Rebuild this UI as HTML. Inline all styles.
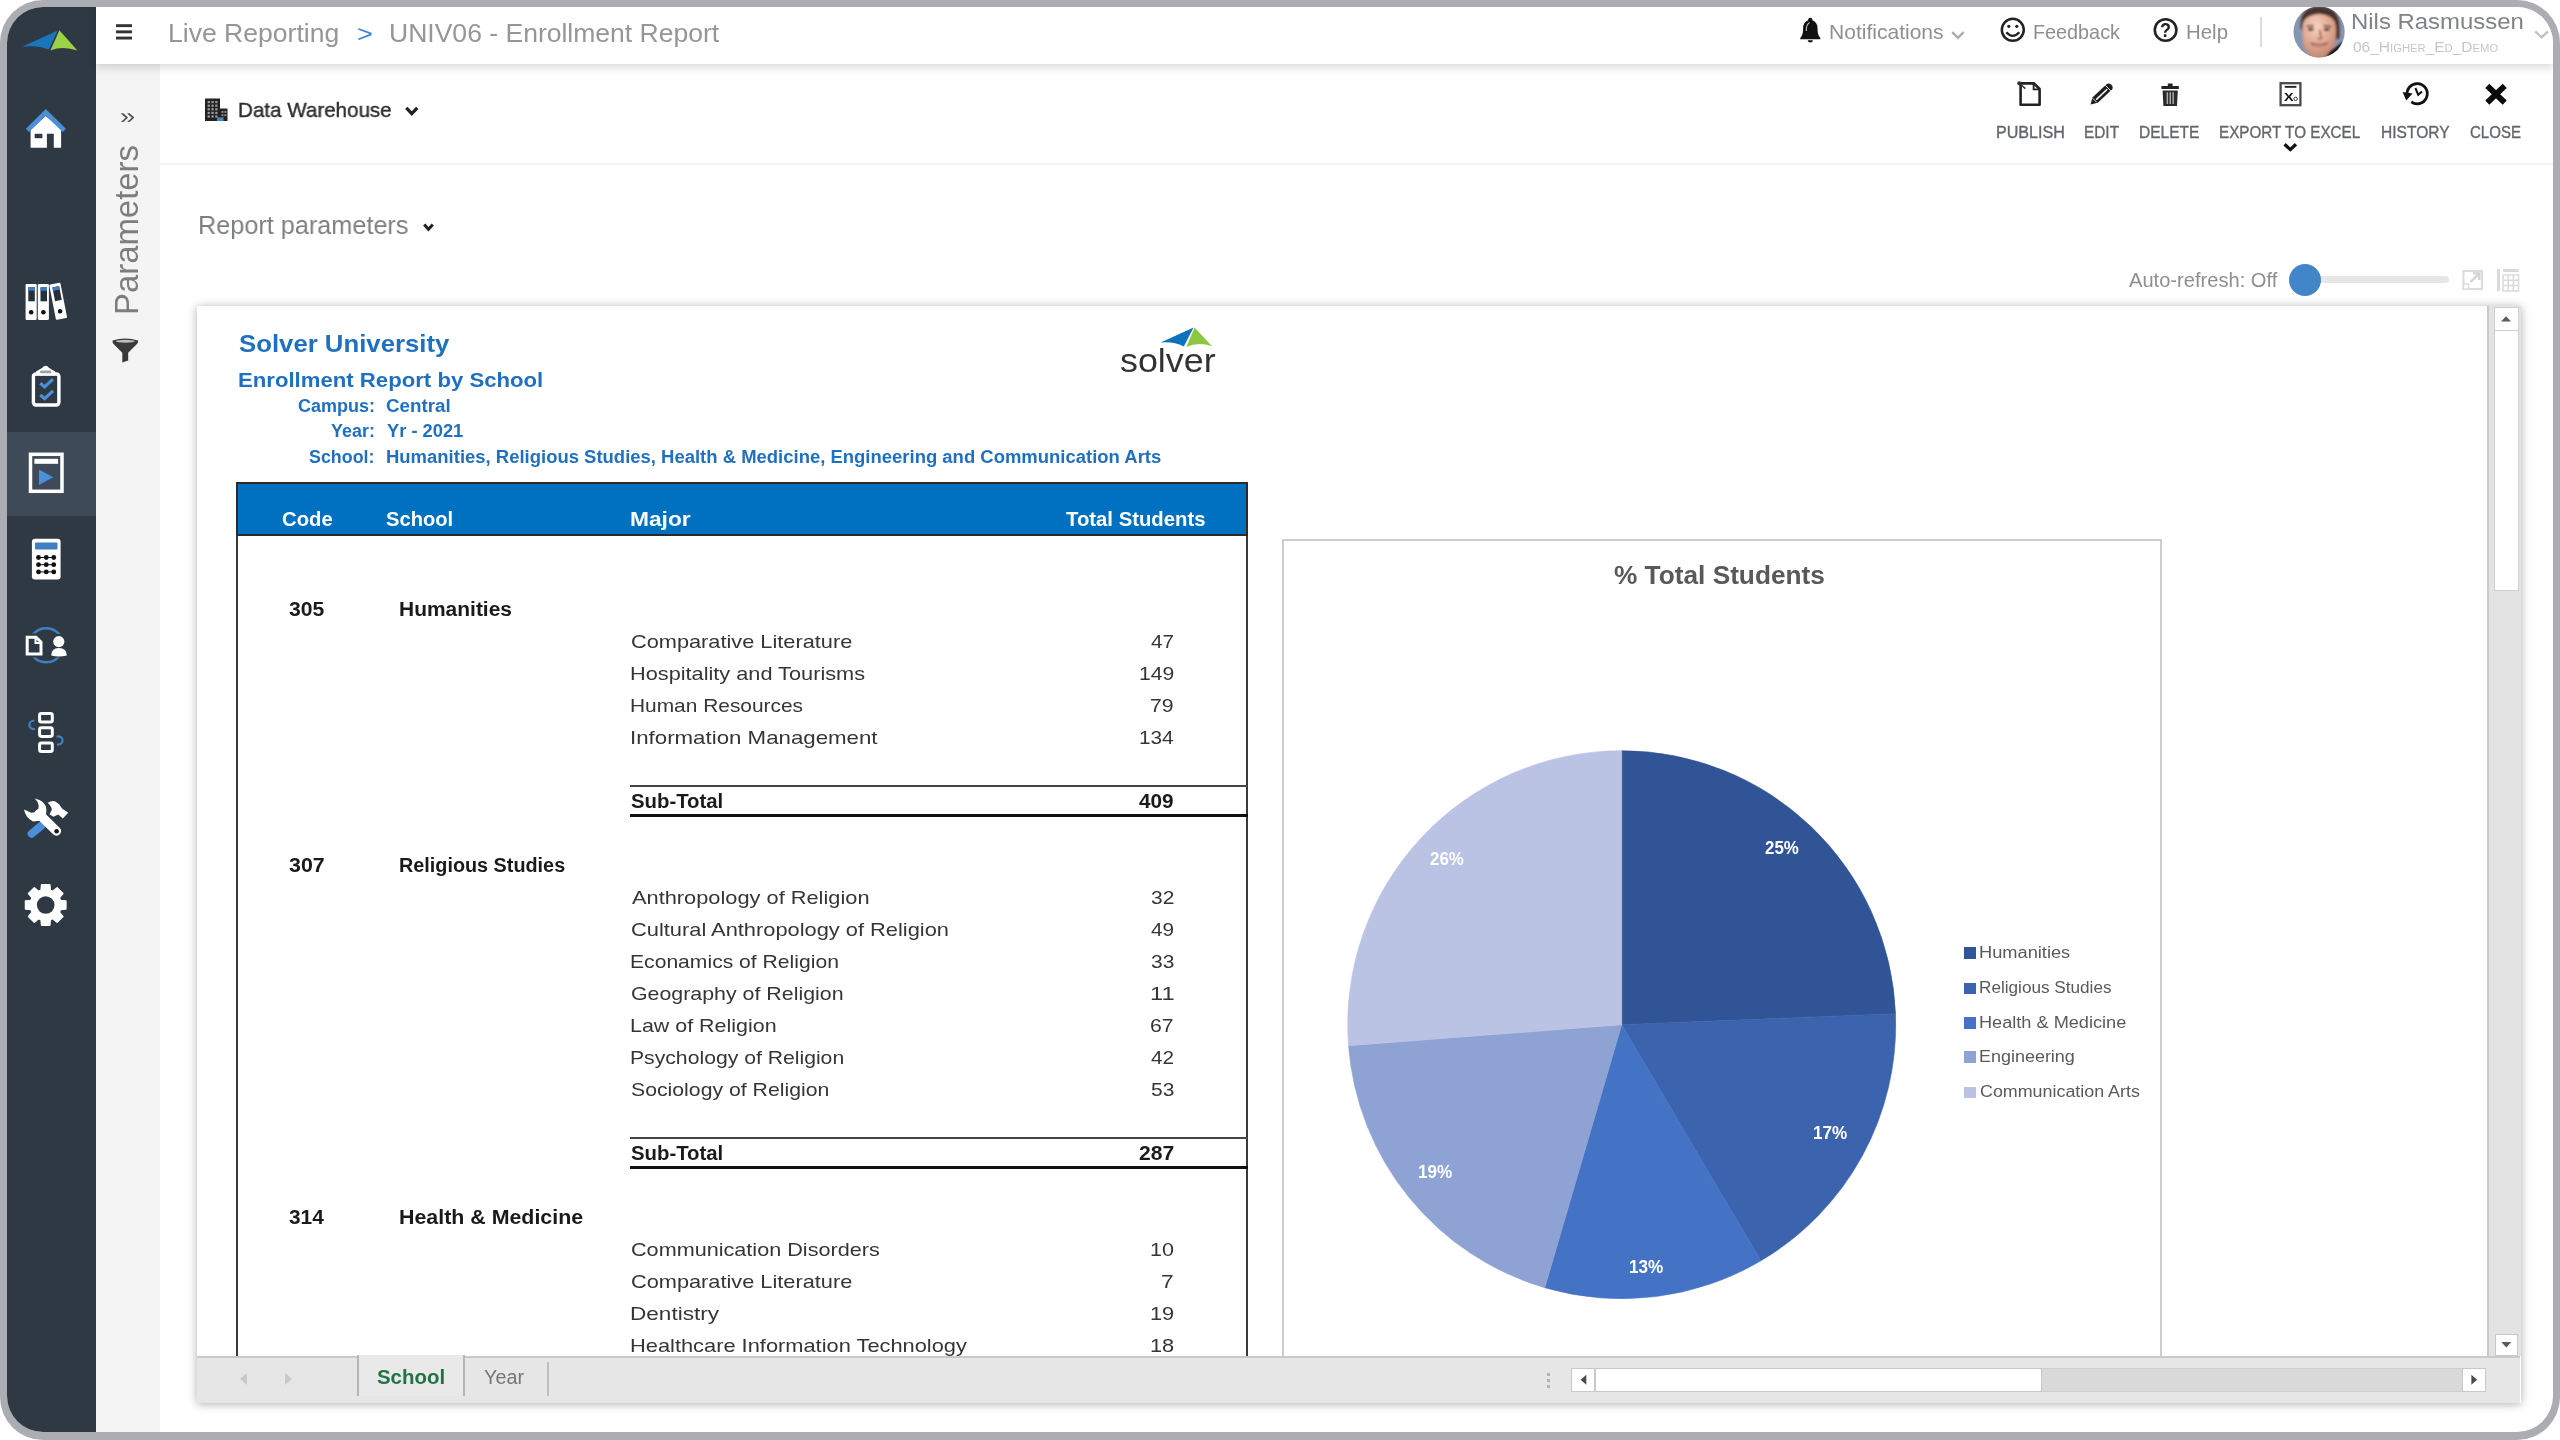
<!DOCTYPE html>
<html lang="en"><head><meta charset="utf-8"><title>UNIV06 - Enrollment Report</title>
<style>
html,body{margin:0;padding:0;background:#fff;}
body{width:2560px;height:1440px;overflow:hidden;position:relative;font-family:"Liberation Sans", sans-serif;}
#frame{position:absolute;left:0;top:0;width:2560px;height:1440px;background:#abadb2;border-radius:43px;}
#app{position:absolute;left:7px;top:7px;width:2546px;height:1425px;background:#fff;border-radius:36px;overflow:hidden;}
#abs{position:absolute;left:-7px;top:-7px;width:2560px;height:1440px;will-change:transform;}
.b{position:absolute;}
.ic{left:0;top:0;pointer-events:none;}
.t{position:absolute;margin:0;white-space:pre;line-height:1;font-weight:normal;transform-origin:0 50%;}
</style></head>
<body>
<div id="frame"><div id="app"><div id="abs">
<nav id="sidebar" aria-label="Main navigation">
<div class="b" style="left:7px;top:7px;width:89px;height:1426px;background:#2f3943;"></div>
<div class="b" style="left:7px;top:432px;width:89px;height:84px;background:#3e4a57;"></div>
<svg class="b ic" role="img" aria-label="Navigation icons" width="2560" height="1440" viewBox="0 0 2560 1440"><path d="M22.2,46.8 L57.6,30.6 L49,49.6 Q37,44.6 22.2,46.8Z" fill="#1b75bc"/>
<path d="M59.4,30.2 L77.4,50.6 Q63,45.6 50.4,50.4Z" fill="#9bd047"/>
<path d="M30.6,147.7V129.5L45.8,116L61.1,129.5V147.7H53.8V133.8H46.9V147.7Z" fill="#ffffff"/>
<rect x="34.7" y="133.8" width="7.7" height="4.4" fill="#2f3943"/>
<path d="M27.5,130.3L45.8,112.3L64.3,130.3" fill="none" stroke="#4a90d9" stroke-width="4.6" stroke-linejoin="miter"/>
<g><rect x="25.6" y="284" width="11.1" height="36" rx="1.2" fill="#ffffff"/><rect x="28.3" y="287.3" width="6.5" height="14" fill="#26303a"/><rect x="28.3" y="287.3" width="6.5" height="3.4" fill="#3f7fc6"/><circle cx="31.150000000000002" cy="312.2" r="2.3" fill="#111"/></g>
<g><rect x="37.8" y="284" width="11.1" height="36" rx="1.2" fill="#ffffff"/><rect x="40.5" y="287.3" width="6.5" height="14" fill="#26303a"/><rect x="40.5" y="287.3" width="6.5" height="3.4" fill="#3f7fc6"/><circle cx="43.349999999999994" cy="312.2" r="2.3" fill="#111"/></g>
<g transform="rotate(-11 56 320)"><rect x="56" y="284" width="11.4" height="36" rx="1.2" fill="#ffffff"/><rect x="58.7" y="287.3" width="6.800000000000001" height="14" fill="#26303a"/><rect x="58.7" y="287.3" width="6.800000000000001" height="3.4" fill="#3f7fc6"/><circle cx="61.7" cy="312.2" r="2.3" fill="#111"/></g>
<rect x="33.4" y="374" width="25.5" height="31" rx="2.5" fill="none" stroke="#ffffff" stroke-width="3.4"/>
<path d="M36,375.5 V371.5 L42,368 Q45.6,363.5 49.2,368 L55.2,371.5 V375.5Z" fill="#ffffff"/>
<rect x="40" y="370.6" width="11.4" height="2.6" rx="1.3" fill="#9aa3ad"/>
<path d="M40.3,383.3 L44.6,386.90000000000003 L53,379.1" fill="none" stroke="#4a90d9" stroke-width="3.2"/>
<path d="M40.3,395.0 L44.6,398.6 L53,390.8" fill="none" stroke="#4a90d9" stroke-width="3.2"/>
<rect x="30.5" y="454.3" width="31.5" height="37" fill="none" stroke="#ffffff" stroke-width="3.5"/>
<rect x="34.4" y="458.8" width="23.7" height="5" fill="#ffffff"/>
<path d="M39,469.4 L53.2,477.2 L39,485Z" fill="#4a90d9"/>
<rect x="31.9" y="538.8" width="28.7" height="40.6" rx="3.2" fill="#ffffff"/>
<rect x="35" y="542.5" width="22.5" height="6.9" rx="1" fill="#3f7fc6"/>
<circle cx="38.5" cy="557.5" r="2.4" fill="#111"/>
<circle cx="38.5" cy="564.7" r="2.4" fill="#111"/>
<circle cx="38.5" cy="571.9" r="2.4" fill="#111"/>
<circle cx="46.25" cy="557.5" r="2.4" fill="#111"/>
<circle cx="46.25" cy="564.7" r="2.4" fill="#111"/>
<circle cx="46.25" cy="571.9" r="2.4" fill="#111"/>
<circle cx="53.75" cy="557.5" r="2.4" fill="#111"/>
<circle cx="53.75" cy="564.7" r="2.4" fill="#111"/>
<circle cx="53.75" cy="571.9" r="2.4" fill="#111"/>
<path d="M38.5,557.5H53.75" stroke="#111" stroke-width="1"/>
<path d="M38.5,564.7H53.75" stroke="#111" stroke-width="1"/>
<path d="M38.5,571.9H53.75" stroke="#111" stroke-width="1"/>
<circle cx="46.2" cy="645.3" r="17" fill="none" stroke="#3f7fc0" stroke-width="2.6"/>
<rect x="24" y="633.5" width="20.5" height="24" fill="#2f3943"/>
<rect x="49.5" y="634" width="19" height="23.5" fill="#2f3943"/>
<path d="M27.2,637.2 H36 L41,642.2 V654 H27.2Z" fill="none" stroke="#ffffff" stroke-width="3"/>
<path d="M35.5,637.5 V643 H41" fill="none" stroke="#ffffff" stroke-width="2"/>
<circle cx="58.8" cy="641.6" r="5.6" fill="#ffffff"/>
<path d="M51.2,655.6 Q51.2,648 58.8,648 Q66.8,648 66.8,655.6 Q59,657.5 51.2,655.6Z" fill="#ffffff"/>
<rect x="39.6" y="713.4" width="12.7" height="8.6" rx="1.8" fill="none" stroke="#ffffff" stroke-width="3"/>
<rect x="39.6" y="727.8" width="12.7" height="8.6" rx="1.8" fill="none" stroke="#ffffff" stroke-width="3"/>
<rect x="39.6" y="742.9" width="12.7" height="8.6" rx="1.8" fill="none" stroke="#ffffff" stroke-width="3"/>
<path d="M34.5,720.5 Q28.5,721 29.5,726 Q30.5,729.5 35,729" fill="none" stroke="#3f7fc0" stroke-width="2.2"/>
<path d="M56.5,736.5 Q63,736 62.5,741 Q61.5,745 57,744.5" fill="none" stroke="#3f7fc0" stroke-width="2.2"/>
<path d="M41.4,825.6 L31.6,833.8" stroke="#4a90d9" stroke-width="8" stroke-linecap="round"/>
<path d="M39,814 L56.4,831" stroke="#ffffff" stroke-width="9.4" stroke-linecap="round"/>
<path d="M34.6,798.6 Q45.8,800.4 46.4,810 Q46.6,817 42,820.6 L33,821.6 Q25.4,817.6 24,809.6 L30.6,812.6 Q36,813 38.4,808.4 Q39.6,803 34.6,798.6Z" fill="#ffffff"/>
<circle cx="56.6" cy="831.3" r="2.3" fill="#15191e"/>
<path d="M47.6,802.8 Q52,800.2 55.4,801.4 L59.4,804.4 L62,808.6 L68.2,812.8 L62.8,818.4 L58.2,814.4 L53.4,816.8 L49.4,814.2 L51.8,810 Q51.6,806 47.6,802.8Z" fill="#ffffff"/>
<path d="M41.1,890.3L41.6,884.8L49.8,884.8L50.3,890.3L52.9,891.4L57.1,887.8L62.9,893.6L59.3,897.8L60.4,900.4L65.9,900.9L65.9,909.1L60.4,909.6L59.3,912.2L62.9,916.4L57.1,922.2L52.9,918.6L50.3,919.7L49.8,925.2L41.6,925.2L41.1,919.7L38.5,918.6L34.3,922.2L28.5,916.4L32.1,912.2L31.0,909.6L25.5,909.1L25.5,900.9L31.0,900.4L32.1,897.8L28.5,893.6L34.3,887.8L38.5,891.4Z" fill="#ffffff" stroke="#ffffff" stroke-width="1.5" stroke-linejoin="round"/>
<circle cx="45.7" cy="905" r="8.8" fill="#2f3943"/></svg>
</nav>
<aside id="params" aria-label="Parameters panel">
<div class="b" style="left:96px;top:64px;width:64px;height:1369px;background:#f4f4f4;"></div>
<span class="t" style="font-size:22px;color:#555;left:120.07px;top:105.88px;transform:scaleX(1.2381);">»</span>
<span class="t" style="font-size:33px;color:#7b7e81;left:138.00px;top:315.34px;transform-origin:0 0;transform:rotate(-90deg) translateY(-27.93px) scaleX(0.9967);">Parameters</span>
<svg class="b ic" role="img" aria-label="Filter icon" width="2560" height="1440" viewBox="0 0 2560 1440"><path d="M112.5,340.5 Q125.3,336.5 138,340.5 Q138.6,343 136,345 L128.2,352.8 V360.5 L122.3,362.5 V352.8 L114.5,345 Q112,343 112.5,340.5Z" fill="#3a3a3a"/>
<ellipse cx="125.3" cy="341.2" rx="9.5" ry="1.5" fill="#bdbdbd"/></svg>
</aside>
<main id="main">
<section id="toolbar" aria-label="Report toolbar">
<div class="b" style="left:160px;top:163px;width:2393px;height:1.5px;background:#f4f4f4;"></div>
<span class="t" style="font-size:21px;color:#2e2e2e;-webkit-text-stroke:0.4px #2e2e2e;left:237.78px;top:99.22px;transform:scaleX(0.9802);">Data Warehouse</span>
<span class="t" style="font-size:16.2px;color:#62676c;-webkit-text-stroke:0.35px #62676c;left:1995.71px;top:124.29px;transform:scaleX(0.9948);">PUBLISH</span>
<span class="t" style="font-size:16.2px;color:#62676c;-webkit-text-stroke:0.35px #62676c;left:2084.06px;top:124.29px;transform:scaleX(0.9504);">EDIT</span>
<span class="t" style="font-size:16.2px;color:#62676c;-webkit-text-stroke:0.35px #62676c;left:2139.15px;top:124.29px;transform:scaleX(0.9607);">DELETE</span>
<span class="t" style="font-size:16.2px;color:#62676c;-webkit-text-stroke:0.35px #62676c;left:2219.08px;top:124.29px;transform:scaleX(0.9418);">EXPORT TO EXCEL</span>
<span class="t" style="font-size:16.2px;color:#62676c;-webkit-text-stroke:0.35px #62676c;left:2380.55px;top:124.29px;transform:scaleX(0.9606);">HISTORY</span>
<span class="t" style="font-size:16.2px;color:#62676c;-webkit-text-stroke:0.35px #62676c;left:2469.96px;top:124.29px;transform:scaleX(0.9290);">CLOSE</span>
<span class="t" style="font-size:10.8px;color:#111;font-weight:bold;left:2284.33px;top:91.56px;transform:scaleX(1.3333);">X</span>
<span class="t" style="font-size:26px;color:#7d8083;left:198.06px;top:212.39px;transform:scaleX(0.9708);">Report parameters</span>
<span class="t" style="font-size:20px;color:#8d8f92;left:2129.00px;top:269.57px;transform:scaleX(1.0054);">Auto-refresh: Off</span>
<div class="b" style="left:2310px;top:276px;width:139px;height:7px;background:#e6e6e6;border-radius:4px;"></div>
<div class="b" style="left:2289px;top:263.5px;width:32px;height:32px;background:#4285c9;border-radius:50%;"></div>
<svg class="b ic" role="img" aria-label="Toolbar icons" width="2560" height="1440" viewBox="0 0 2560 1440"><path d="M205,98.5 H220 V108.5 H227.5 V121 H205Z" fill="#222"/>
<rect x="207.6" y="101" width="2.3" height="2.2" fill="#9a9a9a"/>
<rect x="207.6" y="104.6" width="2.3" height="2.2" fill="#9a9a9a"/>
<rect x="207.6" y="108.2" width="2.3" height="2.2" fill="#9a9a9a"/>
<rect x="207.6" y="111.8" width="2.3" height="2.2" fill="#9a9a9a"/>
<rect x="207.6" y="115.4" width="2.3" height="2.2" fill="#9a9a9a"/>
<rect x="211.4" y="101" width="2.3" height="2.2" fill="#9a9a9a"/>
<rect x="211.4" y="104.6" width="2.3" height="2.2" fill="#9a9a9a"/>
<rect x="211.4" y="108.2" width="2.3" height="2.2" fill="#9a9a9a"/>
<rect x="211.4" y="111.8" width="2.3" height="2.2" fill="#9a9a9a"/>
<rect x="211.4" y="115.4" width="2.3" height="2.2" fill="#9a9a9a"/>
<rect x="215.2" y="101" width="2.3" height="2.2" fill="#9a9a9a"/>
<rect x="215.2" y="104.6" width="2.3" height="2.2" fill="#9a9a9a"/>
<rect x="215.2" y="108.2" width="2.3" height="2.2" fill="#9a9a9a"/>
<rect x="215.2" y="111.8" width="2.3" height="2.2" fill="#9a9a9a"/>
<rect x="215.2" y="115.4" width="2.3" height="2.2" fill="#9a9a9a"/>
<rect x="221.6" y="111" width="1.8" height="1.9" fill="#9a9a9a"/>
<rect x="221.6" y="114.2" width="1.8" height="1.9" fill="#9a9a9a"/>
<rect x="224.5" y="111" width="1.8" height="1.9" fill="#9a9a9a"/>
<rect x="224.5" y="114.2" width="1.8" height="1.9" fill="#9a9a9a"/>
<rect x="217" y="117.3" width="6.5" height="3.7" fill="#4b83c3"/>
<path d="M406.3,107.8 L411.8,113.6 L417.3,107.8" fill="none" stroke="#222" stroke-width="3.2" stroke-linecap="butt" stroke-linejoin="miter"/>
<path d="M424.2,224.4 L428.5,229.2 L432.8,224.4" fill="none" stroke="#222" stroke-width="3" stroke-linecap="butt" stroke-linejoin="miter"/>
<path d="M2284.6,144.2 L2290.3,149.6 L2296,144.2" fill="none" stroke="#111" stroke-width="3.3" stroke-linecap="butt" stroke-linejoin="miter"/>
<path d="M2020.6,83.4 H2034 L2039.6,89 V104.8 H2020.6Z" fill="none" stroke="#222" stroke-width="2.6" stroke-linejoin="round"/>
<path d="M2033.6,83.6 V89.4 H2039.4" fill="none" stroke="#222" stroke-width="1.8"/>
<circle cx="2019.3" cy="83.3" r="2.1" fill="#333"/><path d="M2019.5,83.5 L2025.4,88.6" stroke="#333" stroke-width="1.5"/>
<path d="M2090.6,104.4 L2092.4,97.4 L2106.8,84 Q2109,82.6 2111.4,84.8 Q2113.6,87.2 2112.2,89.2 L2097.8,102.8Z" fill="#1f1f1f"/>
<path d="M2096.2,99.6 L2107.2,89.2" stroke="#fff" stroke-width="1.5"/>
<path d="M2105.4,85.4 L2110.8,90.8" stroke="#fff" stroke-width="0.9"/>
<path d="M2092.6,98.2 L2096.8,102.4" stroke="#fff" stroke-width="0.9"/>
<path d="M2161.4,86 H2178.8 V89 H2161.4Z M2167.8,83.4 H2172.6 V86 H2167.8Z" fill="#222"/>
<path d="M2162.6,90.6 H2177.8 L2177,105.9 H2163.4Z" fill="#2a2a2a"/>
<rect x="2166.6" y="92.2" width="1.5" height="11.8" fill="#aaa"/><rect x="2169.5" y="92.2" width="1.5" height="11.8" fill="#aaa"/><rect x="2172.4" y="92.2" width="1.5" height="11.8" fill="#aaa"/>
<rect x="2280.6" y="83.2" width="19.8" height="22" fill="none" stroke="#4a4a4a" stroke-width="2.3"/>
<rect x="2284.8" y="85.9" width="11.6" height="1.9" fill="#222"/>
<circle cx="2295.6" cy="98.8" r="1.7" fill="none" stroke="#333" stroke-width="1"/>
<path d="M2407.2,95.3 A10.1,10.1 0 1 1 2411.3,101.9" fill="none" stroke="#111" stroke-width="2.8"/>
<path d="M2402.6,92 L2412.6,93.6 L2406.2,100.6Z" fill="#111"/>
<path d="M2415.4,88 L2418.2,94.8 L2422,91.4" fill="none" stroke="#111" stroke-width="2"/>
<path d="M2487.3,85.9 L2504.7,102.7 M2504.7,85.9 L2487.3,102.7" stroke="#0a0a0a" stroke-width="5.8"/>
<rect x="2463.5" y="271" width="18.5" height="18" fill="none" stroke="#dcdcdc" stroke-width="2"/>
<rect x="2463.5" y="284" width="5" height="5" fill="#fff" stroke="#dcdcdc" stroke-width="1.4"/>
<path d="M2470.5,282 L2479,273.6 M2473,273.4 H2479.4 V280" fill="none" stroke="#d4d4d4" stroke-width="2.4"/>
<rect x="2497" y="269" width="3" height="22" fill="#dadada"/><rect x="2503" y="269" width="15.5" height="3" fill="#dadada"/>
<path d="M2503,275 H2518.5 V291 H2503Z M2508.2,275 V291 M2513.4,275 V291 M2503,280.3 H2518.5 M2503,285.6 H2518.5" fill="none" stroke="#dadada" stroke-width="1.5"/></svg>
</section>
<section id="sheet" aria-label="Spreadsheet viewer">
<div class="b" style="left:197px;top:306px;width:2324px;height:1097px;background:#fff;box-shadow:0 1px 9px rgba(0,0,0,.32);"></div>
<div class="b" style="left:2487px;top:306px;width:34px;height:1050px;background:#e3e3e3;border-left:2px solid #c9c9c9;box-sizing:border-box;"></div>
<div class="b" style="left:2494px;top:307px;width:25px;height:24px;background:#fff;border:1px solid #cfcfcf;box-sizing:border-box;"></div>
<div class="b" style="left:2494px;top:330px;width:25px;height:261px;background:#fff;border:1px solid #cfcfcf;box-sizing:border-box;"></div>
<div class="b" style="left:2495px;top:1334px;width:23px;height:22px;background:#fff;border:1px solid #c8c8c8;box-sizing:border-box;"></div>
<svg class="b ic" role="img" aria-label="Scrollbar arrows" width="2560" height="1440" viewBox="0 0 2560 1440"><path d="M2501,321.5 L2506,316.3 L2511,321.5Z" fill="#5a5a5a"/>
<path d="M2501.3,1342 L2506.3,1347.4 L2511.3,1342Z" fill="#5a5a5a"/></svg>
</section>
<header id="report-head" aria-label="Report heading">
<h1 class="t" style="font-size:23.7px;color:#1f70c1;font-weight:bold;left:239.13px;top:332.94px;transform:scaleX(1.0870);">Solver University</h1>
<h2 class="t" style="font-size:21px;color:#1f70c1;font-weight:bold;left:238.42px;top:369.12px;transform:scaleX(1.0550);">Enrollment Report by School</h2>
<span class="t" style="font-size:17.5px;color:#1f70c1;font-weight:bold;left:297.98px;top:398.19px;transform:scaleX(1.0276);">Campus:</span>
<span class="t" style="font-size:17.5px;color:#1f70c1;font-weight:bold;left:386.20px;top:398.19px;transform:scaleX(1.0730);">Central</span>
<span class="t" style="font-size:17.5px;color:#1f70c1;font-weight:bold;left:330.99px;top:423.19px;transform:scaleX(1.0244);">Year:</span>
<span class="t" style="font-size:17.5px;color:#1f70c1;font-weight:bold;left:386.74px;top:423.19px;transform:scaleX(1.0450);">Yr - 2021</span>
<span class="t" style="font-size:17.5px;color:#1f70c1;font-weight:bold;left:309.49px;top:449.39px;transform:scaleX(1.0202);">School:</span>
<span class="t" style="font-size:17.5px;color:#1f70c1;font-weight:bold;left:385.68px;top:449.39px;transform:scaleX(1.0556);">Humanities, Religious Studies, Health &amp; Medicine, Engineering and Communication Arts</span>
<span class="t" style="font-size:34px;color:#333;left:1120.45px;top:342.72px;transform:scaleX(1.0543);">solver</span>
<svg class="b ic" role="img" aria-label="Solver logo" width="2560" height="1440" viewBox="0 0 2560 1440"><path d="M1160.6,342.6 L1193.6,327.4 L1183.8,346.4 Q1173,341.2 1160.6,342.6Z" fill="#0c73ba"/>
<path d="M1194.6,327.6 L1212,346.2 Q1198.5,341.2 1186.4,347Z" fill="#8dc63f"/></svg>
</header>
<section id="report-table" aria-label="Enrollment table">
<div class="b" style="left:236px;top:482px;width:1012px;height:874px;border:2px solid #3a3a3a;border-bottom:none;box-sizing:border-box;background:#fff;"></div>
<div class="b" style="left:236px;top:482px;width:1012px;height:54px;background:#0070c0;border:2px solid #2b2b2b;box-sizing:border-box;"></div>
<span class="t" style="font-size:21px;color:#fff;font-weight:bold;left:281.78px;top:507.97px;transform:scaleX(0.9657);">Code</span>
<span class="t" style="font-size:21px;color:#fff;font-weight:bold;left:385.53px;top:507.97px;transform:scaleX(0.9594);">School</span>
<span class="t" style="font-size:21px;color:#fff;font-weight:bold;left:630.13px;top:507.97px;transform:scaleX(1.0829);">Major</span>
<span class="t" style="font-size:21px;color:#fff;font-weight:bold;left:1065.51px;top:507.97px;transform:scaleX(0.9668);">Total Students</span>
<span class="t" style="font-size:19.5px;color:#1a1a1a;font-weight:bold;left:289.46px;top:599.74px;transform:scaleX(1.0873);">305</span>
<span class="t" style="font-size:19.5px;color:#1a1a1a;font-weight:bold;left:398.66px;top:599.74px;transform:scaleX(1.0752);">Humanities</span>
<span class="t" style="font-size:19px;color:#353535;left:630.61px;top:631.92px;transform:scaleX(1.1449);">Comparative Literature</span>
<span class="t" style="font-size:19px;color:#353535;left:1150.96px;top:631.92px;transform:scaleX(1.0886);">47</span>
<span class="t" style="font-size:19px;color:#353535;left:630.04px;top:663.92px;transform:scaleX(1.1433);">Hospitality and Tourisms</span>
<span class="t" style="font-size:19px;color:#353535;left:1138.83px;top:663.92px;transform:scaleX(1.1111);">149</span>
<span class="t" style="font-size:19px;color:#353535;left:630.10px;top:695.92px;transform:scaleX(1.0998);">Human Resources</span>
<span class="t" style="font-size:19px;color:#353535;left:1150.38px;top:695.92px;transform:scaleX(1.1169);">79</span>
<span class="t" style="font-size:19px;color:#353535;left:629.70px;top:727.92px;transform:scaleX(1.1720);">Information Management</span>
<span class="t" style="font-size:19px;color:#353535;left:1138.86px;top:727.92px;transform:scaleX(1.0924);">134</span>
<div class="b" style="left:630px;top:784.5px;width:618px;height:2px;background:#444;"></div>
<div class="b" style="left:630px;top:813.9px;width:618px;height:3px;background:#111;"></div>
<span class="t" style="font-size:19.5px;color:#1a1a1a;font-weight:bold;left:631.23px;top:791.79px;transform:scaleX(1.0427);">Sub-Total</span>
<span class="t" style="font-size:19.5px;color:#1a1a1a;font-weight:bold;left:1139.23px;top:791.79px;transform:scaleX(1.0635);">409</span>
<span class="t" style="font-size:19.5px;color:#1a1a1a;font-weight:bold;left:289.45px;top:855.74px;transform:scaleX(1.0960);">307</span>
<span class="t" style="font-size:19.5px;color:#1a1a1a;font-weight:bold;left:398.73px;top:855.74px;transform:scaleX(1.0155);">Religious Studies</span>
<span class="t" style="font-size:19px;color:#353535;left:631.75px;top:887.92px;transform:scaleX(1.1473);">Anthropology of Religion</span>
<span class="t" style="font-size:19px;color:#353535;left:1150.67px;top:887.92px;transform:scaleX(1.1026);">32</span>
<span class="t" style="font-size:19px;color:#353535;left:630.60px;top:919.92px;transform:scaleX(1.1490);">Cultural Anthropology of Religion</span>
<span class="t" style="font-size:19px;color:#353535;left:1150.96px;top:919.92px;transform:scaleX(1.0886);">49</span>
<span class="t" style="font-size:19px;color:#353535;left:630.08px;top:951.92px;transform:scaleX(1.1112);">Econamics of Religion</span>
<span class="t" style="font-size:19px;color:#353535;left:1150.67px;top:951.92px;transform:scaleX(1.1026);">33</span>
<span class="t" style="font-size:19px;color:#353535;left:630.63px;top:983.92px;transform:scaleX(1.1242);">Geography of Religion</span>
<span class="t" style="font-size:19px;color:#353535;left:1149.63px;top:983.92px;transform:scaleX(1.2464);">11</span>
<span class="t" style="font-size:19px;color:#353535;left:630.06px;top:1015.92px;transform:scaleX(1.1281);">Law of Religion</span>
<span class="t" style="font-size:19px;color:#353535;left:1150.38px;top:1015.92px;transform:scaleX(1.1169);">67</span>
<span class="t" style="font-size:19px;color:#353535;left:630.08px;top:1047.92px;transform:scaleX(1.1142);">Psychology of Religion</span>
<span class="t" style="font-size:19px;color:#353535;left:1150.96px;top:1047.92px;transform:scaleX(1.0886);">42</span>
<span class="t" style="font-size:19px;color:#353535;left:630.63px;top:1079.92px;transform:scaleX(1.1175);">Sociology of Religion</span>
<span class="t" style="font-size:19px;color:#353535;left:1150.67px;top:1079.92px;transform:scaleX(1.1026);">53</span>
<div class="b" style="left:630px;top:1136.5px;width:618px;height:2px;background:#444;"></div>
<div class="b" style="left:630px;top:1165.9px;width:618px;height:3px;background:#111;"></div>
<span class="t" style="font-size:19.5px;color:#1a1a1a;font-weight:bold;left:631.23px;top:1143.79px;transform:scaleX(1.0427);">Sub-Total</span>
<span class="t" style="font-size:19.5px;color:#1a1a1a;font-weight:bold;left:1138.69px;top:1143.79px;transform:scaleX(1.0806);">287</span>
<span class="t" style="font-size:19.5px;color:#1a1a1a;font-weight:bold;left:289.46px;top:1207.74px;transform:scaleX(1.0703);">314</span>
<span class="t" style="font-size:19.5px;color:#1a1a1a;font-weight:bold;left:398.63px;top:1207.74px;transform:scaleX(1.0964);">Health &amp; Medicine</span>
<span class="t" style="font-size:19px;color:#353535;left:630.61px;top:1239.92px;transform:scaleX(1.1380);">Communication Disorders</span>
<span class="t" style="font-size:19px;color:#353535;left:1149.80px;top:1239.92px;transform:scaleX(1.1316);">10</span>
<span class="t" style="font-size:19px;color:#353535;left:630.61px;top:1271.92px;transform:scaleX(1.1449);">Comparative Literature</span>
<span class="t" style="font-size:19px;color:#353535;left:1161.30px;top:1271.92px;transform:scaleX(1.2000);">7</span>
<span class="t" style="font-size:19px;color:#353535;left:629.97px;top:1303.92px;transform:scaleX(1.1871);">Dentistry</span>
<span class="t" style="font-size:19px;color:#353535;left:1149.78px;top:1303.92px;transform:scaleX(1.1467);">19</span>
<span class="t" style="font-size:19px;color:#353535;left:630.03px;top:1335.92px;transform:scaleX(1.1488);">Healthcare Information Technology</span>
<span class="t" style="font-size:19px;color:#353535;left:1149.78px;top:1335.92px;transform:scaleX(1.1467);">18</span>
</section>
<figure id="report-chart" aria-label="Percent total students chart">
<div class="b" style="left:1282px;top:539px;width:880px;height:830px;border:2px solid #cdcdcd;box-sizing:border-box;background:#fff;"></div>
<svg class="b ic" role="img" aria-label="Pie chart: % Total Students" width="2560" height="1440" viewBox="0 0 2560 1440"><path d="M1621.7,1024.7L1621.7,750.7A274,274 0 0 1 1895.5,1013.7Z" fill="#305496" stroke="#305496" stroke-width="0.6"/><path d="M1621.7,1024.7L1895.5,1013.7A274,274 0 0 1 1760.8,1260.8Z" fill="#3c64ae" stroke="#3c64ae" stroke-width="0.6"/><path d="M1621.7,1024.7L1760.8,1260.8A274,274 0 0 1 1544.8,1287.7Z" fill="#4472c4" stroke="#4472c4" stroke-width="0.6"/><path d="M1621.7,1024.7L1544.8,1287.7A274,274 0 0 1 1348.5,1045.7Z" fill="#8fa2d4" stroke="#8fa2d4" stroke-width="0.6"/><path d="M1621.7,1024.7L1348.5,1045.7A274,274 0 0 1 1621.7,750.7Z" fill="#bac3e3" stroke="#bac3e3" stroke-width="0.6"/></svg>
<span class="t" style="font-size:26.7px;color:#595959;font-weight:bold;left:1614.46px;top:562.15px;transform:scaleX(0.9831);">% Total Students</span>
<span class="t" style="font-size:18px;color:#fff;font-weight:bold;left:1764.73px;top:839.06px;transform:scaleX(0.9371);">25%</span>
<span class="t" style="font-size:18px;color:#fff;font-weight:bold;left:1812.65px;top:1123.86px;transform:scaleX(0.9507);">17%</span>
<span class="t" style="font-size:18px;color:#fff;font-weight:bold;left:1628.65px;top:1258.06px;transform:scaleX(0.9507);">13%</span>
<span class="t" style="font-size:18px;color:#fff;font-weight:bold;left:1417.65px;top:1163.26px;transform:scaleX(0.9507);">19%</span>
<span class="t" style="font-size:18px;color:#fff;font-weight:bold;left:1429.93px;top:849.66px;transform:scaleX(0.9371);">26%</span>
<div class="b" style="left:1964px;top:947.1px;width:11.5px;height:11.5px;background:#305496;"></div>
<span class="t" style="font-size:16px;color:#5a5a5a;left:1979.08px;top:944.76px;transform:scaleX(1.1399);">Humanities</span>
<div class="b" style="left:1964px;top:982.5px;width:11.5px;height:11.5px;background:#3c64ae;"></div>
<span class="t" style="font-size:16px;color:#5a5a5a;left:1979.16px;top:980.16px;transform:scaleX(1.0719);">Religious Studies</span>
<div class="b" style="left:1964px;top:1017.3px;width:11.5px;height:11.5px;background:#4472c4;"></div>
<span class="t" style="font-size:16px;color:#5a5a5a;left:1979.08px;top:1014.96px;transform:scaleX(1.1344);">Health &amp; Medicine</span>
<div class="b" style="left:1964px;top:1051.3px;width:11.5px;height:11.5px;background:#8fa2d4;"></div>
<span class="t" style="font-size:16px;color:#5a5a5a;left:1979.10px;top:1048.96px;transform:scaleX(1.1219);">Engineering</span>
<div class="b" style="left:1964px;top:1086.5px;width:11.5px;height:11.5px;background:#bac3e3;"></div>
<span class="t" style="font-size:16px;color:#5a5a5a;left:1979.66px;top:1084.16px;transform:scaleX(1.1166);">Communication Arts</span>
</figure>
<footer id="sheet-tabs" aria-label="Sheet tabs">
<div class="b" style="left:197px;top:1356px;width:2323px;height:47px;background:#e6e6e6;border-top:2px solid #c9c9c9;box-sizing:border-box;"></div>
<div class="b" style="left:357px;top:1355px;width:108px;height:41px;background:#e9e9e9;border-left:2px solid #b5b5b5;border-right:2px solid #b5b5b5;box-sizing:border-box;"></div>
<div class="b" style="left:547px;top:1362px;width:2px;height:34px;background:#bdbdbd;"></div>
<span class="t" style="font-size:20px;color:#217346;font-weight:bold;left:376.89px;top:1366.67px;transform:scaleX(1.0208);">School</span>
<span class="t" style="font-size:20px;color:#767676;left:484.01px;top:1366.67px;transform:scaleX(0.9899);">Year</span>
<div class="b" style="left:240px;top:1373px;width:0px;height:0px;border-top:6px solid transparent;border-bottom:6px solid transparent;border-right:7px solid #c9c9c9;"></div>
<div class="b" style="left:285px;top:1373px;width:0px;height:0px;border-top:6px solid transparent;border-bottom:6px solid transparent;border-left:7px solid #c9c9c9;"></div>
<div class="b" style="left:1571px;top:1368px;width:915px;height:24px;background:#d9d9d9;border:1px solid #cfcfcf;box-sizing:border-box;"></div>
<div class="b" style="left:1571px;top:1368px;width:24px;height:24px;background:#fff;border:1px solid #c8c8c8;box-sizing:border-box;"></div>
<div class="b" style="left:1595px;top:1368px;width:447px;height:24px;background:#fff;border:1px solid #c8c8c8;box-sizing:border-box;"></div>
<div class="b" style="left:2462px;top:1368px;width:24px;height:24px;background:#fff;border:1px solid #c8c8c8;box-sizing:border-box;"></div>
<div class="b" style="left:1547px;top:1373px;width:3px;height:3px;background:#b5b5b5;"></div>
<div class="b" style="left:1547px;top:1379px;width:3px;height:3px;background:#b5b5b5;"></div>
<div class="b" style="left:1547px;top:1385px;width:3px;height:3px;background:#b5b5b5;"></div>
<svg class="b ic" role="img" aria-label="Scroll arrows" width="2560" height="1440" viewBox="0 0 2560 1440"><path d="M1586.3,1374.8 L1580.6,1379.8 L1586.3,1384.8Z" fill="#4a4a4a"/>
<path d="M2471.4,1374.8 L2477.1,1379.8 L2471.4,1384.8Z" fill="#4a4a4a"/></svg>
</footer>
</main>
<header id="topbar" aria-label="Top bar">
<div class="b" style="left:96px;top:7px;width:2457px;height:57px;background:#fff;box-shadow:0 3px 9px rgba(0,0,0,.17);"></div>
<span class="t" style="font-size:26px;color:#93969a;left:168.46px;top:20.49px;transform:scaleX(1.0213);">Live Reporting</span>
<span class="t" style="font-size:24px;color:#3b86d6;left:356.59px;top:22.18px;transform:scaleX(1.1304);">&gt;</span>
<span class="t" style="font-size:26px;color:#93969a;left:389.46px;top:20.49px;transform:scaleX(1.0202);">UNIV06 - Enrollment Report</span>
<span class="t" style="font-size:19.8px;color:#8d8f92;left:1829.19px;top:22.94px;transform:scaleX(1.0635);">Notifications</span>
<span class="t" style="font-size:19.8px;color:#8d8f92;left:2032.70px;top:22.94px;transform:scaleX(1.0006);">Feedback</span>
<span class="t" style="font-size:20.5px;color:#222;font-weight:bold;left:2160.42px;top:19.95px;transform:scaleX(0.8780);">?</span>
<span class="t" style="font-size:19.8px;color:#8d8f92;left:2186.14px;top:22.94px;transform:scaleX(1.0327);">Help</span>
<div class="b" style="left:2260px;top:17px;width:2px;height:30px;background:#dcdcdc;"></div>
<span class="t" style="font-size:21.8px;color:#808387;left:2351.13px;top:10.85px;transform:scaleX(1.0976);">Nils Rasmussen</span>
<span class="t" style="font-size:13.8px;color:#c4c6c8;font-variant:small-caps;left:2352.89px;top:40.72px;transform:scaleX(1.1235);">06_Higher_Ed_Demo</span>
<svg class="b ic" role="img" aria-label="Top bar icons" width="2560" height="1440" viewBox="0 0 2560 1440"><rect x="116" y="24.2" width="16" height="2.9" fill="#333"/>
<rect x="116" y="30.4" width="16" height="2.9" fill="#333"/>
<rect x="116" y="36.6" width="16" height="2.9" fill="#333"/>
<path d="M1952.2,32.2 L1957.9,37.8 L1963.6,32.2" fill="none" stroke="#ababab" stroke-width="2.4" stroke-linecap="butt" stroke-linejoin="miter"/>
<path d="M2535.2,31.4 L2541.6,37.4 L2548,31.4" fill="none" stroke="#c2c2c2" stroke-width="2.4" stroke-linecap="butt" stroke-linejoin="miter"/>
<path d="M1810.3,17.8 Q1812.6,17.8 1812.4,20.3 Q1817.5,22 1817.5,28.5 Q1817.5,35.5 1820.3,38 V39.3 H1800.3 V38 Q1803.1,35.5 1803.1,28.5 Q1803.1,22 1808.2,20.3 Q1808,17.8 1810.3,17.8Z" fill="#111"/>
<path d="M1807.6,40.2 H1813 Q1812.6,42.6 1810.3,42.6 Q1808,42.6 1807.6,40.2Z" fill="#111"/>
<path d="M1806.3,31 Q1806,24.5 1809.6,22.4" fill="none" stroke="#bbb" stroke-width="1.1"/>
<circle cx="2012.8" cy="29.8" r="11" fill="none" stroke="#222" stroke-width="2.5"/>
<circle cx="2008.8" cy="26.3" r="1.6" fill="#222"/><circle cx="2016.8" cy="26.3" r="1.6" fill="#222"/>
<path d="M2006.3,32.3 Q2012.8,39.5 2019.3,32.3" fill="none" stroke="#222" stroke-width="2.2"/>
<circle cx="2165.6" cy="30" r="10.8" fill="none" stroke="#222" stroke-width="2.6"/>
<defs><clipPath id="avc"><circle cx="2319.1" cy="31.8" r="25.6"/></clipPath><filter id="avb" x="-10%" y="-10%" width="120%" height="120%"><feGaussianBlur stdDeviation="1.25"/></filter><radialGradient id="avf" cx="0.42" cy="0.28" r="0.8"><stop offset="0" stop-color="#f7d2bf"/><stop offset="0.5" stop-color="#e0a992"/><stop offset="1" stop-color="#b77d6a"/></radialGradient></defs>
<g clip-path="url(#avc)"><rect x="2290" y="4" width="60" height="56" fill="#8795b0"/><g filter="url(#avb)"><path d="M2300.5,27 Q2300,7 2319,6.5 Q2339,7 2339.5,27 L2339.5,38 L2335,40 L2335,22 Q2319,13 2303.5,22 L2303.5,33Z" fill="#4a3229"/><path d="M2302.5,30 Q2301,15 2319,14 Q2337,15 2336,30 Q2337,48 2328,56 Q2319,62 2310,56 Q2301,48 2302.5,30Z" fill="url(#avf)"/><path d="M2306.5,26.2 L2314,25.6 M2323.5,25.6 L2331,26.6" stroke="#6b4638" stroke-width="1.6" fill="none"/><ellipse cx="2310.8" cy="29.2" rx="3" ry="1.5" fill="#553629"/><ellipse cx="2326.6" cy="29.4" rx="3" ry="1.5" fill="#553629"/><path d="M2319.6,30 L2321.4,38.5 L2317.5,39" stroke="#a86f5c" stroke-width="2" fill="none"/><path d="M2310.5,43.2 Q2319,49.5 2328,42.8 Q2319,45.4 2310.5,43.2Z" fill="#fbf1ea" stroke="#a0584c" stroke-width="1.3"/><path d="M2330,51 L2343,42 L2346,62 L2322,62Z" fill="#14141d"/></g></g></svg>
</header>
</div></div></div>
</body></html>
